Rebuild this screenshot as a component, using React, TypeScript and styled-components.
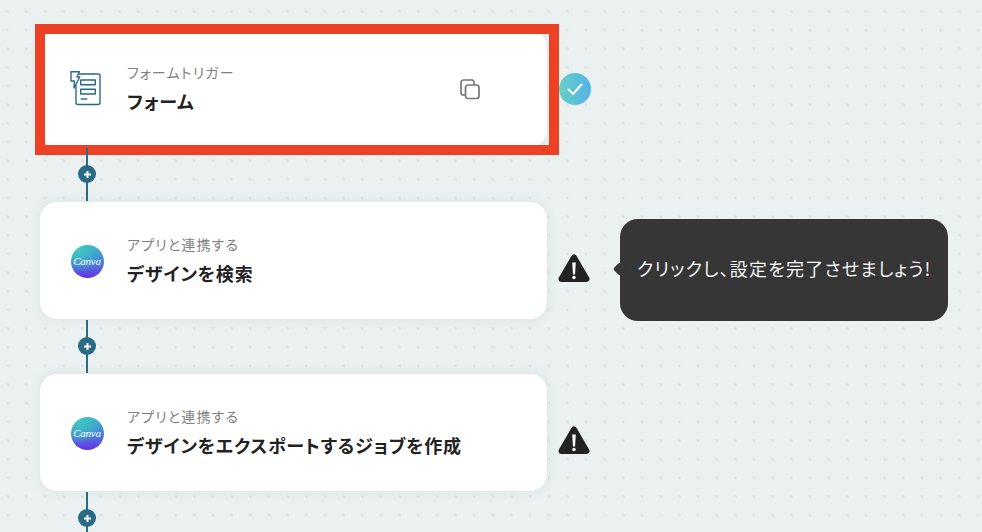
import React from "react";
import styled, { createGlobalStyle } from "styled-components";

const Global = createGlobalStyle`
  html, body { margin: 0; padding: 0; }
  body { font-family: "Noto Sans CJK JP", "Noto Sans", sans-serif; font-feature-settings: "palt"; }
`;

const Canvas = styled.div`
  position: relative;
  width: 982px;
  height: 532px;
  overflow: hidden;
  box-sizing: border-box;
  padding: 29px 0 0 39px;
  background-color: #ebf1f1;
  background-image: radial-gradient(circle, #dfe5e6 1.3px, transparent 1.7px);
  background-size: 18.67px 18.67px;
  background-position: -1.6px 2.2px;
`;

const Step = styled.div`
  position: relative;
  display: flex;
  align-items: center;
  gap: 10px;
  width: 900px;
`;

const Card = styled.div`
  width: 509px;
  height: 119px;
  box-sizing: border-box;
  display: flex;
  align-items: center;
  padding: 0 66px 0 29px;
  background: #fff;
  border-radius: 18px;
  border: 1px solid #e4e9ea;
  box-shadow: 0 0 12px rgba(60, 85, 95, 0.08);
`;

const IconSlot = styled.div`
  width: 36px;
  height: 36px;
  margin-right: 22px;
  display: flex;
  align-items: center;
  justify-content: center;
  flex: none;
`;

const Texts = styled.div`
  flex: 1;
  display: flex;
  flex-direction: column;
  gap: 6px;
  margin-top: -1px;
`;

const Label = styled.div`
  font-size: 14px;
  line-height: 20px;
  letter-spacing: 1.15px;
  color: #7f7f7f;
`;

const Title = styled.div`
  font-size: 18px;
  line-height: 26px;
  font-weight: 700;
  letter-spacing: 0.82px;
  color: #222;
`;

const Highlight = styled.div`
  position: absolute;
  left: -4px;
  top: -5px;
  width: 524px;
  height: 131px;
  box-sizing: border-box;
  border: 10px solid #ec4124;
  pointer-events: none;
`;

const CheckBadge = styled.div`
  width: 32px;
  height: 32px;
  border-radius: 50%;
  background: linear-gradient(90deg, #64d0c4, #54b2ea);
  display: flex;
  align-items: center;
  justify-content: center;
  flex: none;
  margin-left: 1px;
`;

const WarnSlot = styled.div`
  flex: none;
  display: flex;
  margin-top: 14px;
`;

const Connector = styled.div`
  position: relative;
  width: 96px;
  height: 53px;
  display: flex;
  align-items: center;
  justify-content: center;
  &::before {
    content: "";
    position: absolute;
    left: 47px;
    top: 0;
    bottom: 0;
    width: 2px;
    background: #2a6a85;
  }
`;

const Plus = styled.div`
  position: relative;
  width: 18px;
  height: 18px;
  margin-bottom: 1px;
  border-radius: 50%;
  background: #2a6a85;
  display: flex;
  align-items: center;
  justify-content: center;
`;

const CanvaLogo = styled.div`
  width: 33px;
  height: 33px;
  margin-top: 1px;
  border-radius: 50%;
  background: radial-gradient(circle at 25% 15%, #3fc7c0 0%, transparent 60%),
    linear-gradient(180deg, #3bb3c8 0%, #4a7fd8 55%, #6a2fe8 100%);
  display: flex;
  align-items: center;
  justify-content: center;
  color: #fff;
  font-family: "Liberation Serif", serif;
  font-style: italic;
  font-size: 11px;
  letter-spacing: -0.2px;
  font-feature-settings: normal;
`;

const Tooltip = styled.div`
  position: absolute;
  left: 581px;
  top: 18px;
  width: 328px;
  height: 102px;
  box-sizing: border-box;
  border-radius: 18px;
  background: #363636;
  color: #f4f4f4;
  font-size: 18px;
  letter-spacing: 1.22px;
  display: flex;
  align-items: center;
  padding: 0 0 5px 17px;
  white-space: nowrap;
  &::before {
    content: "";
    position: absolute;
    left: -5px;
    top: 45px;
    width: 10px;
    height: 10px;
    background: #363636;
    transform: rotate(45deg);
    border-radius: 2px;
  }
`;

const FormIcon = () => (
  <svg width="36" height="38" viewBox="0 0 36 38" fill="none" stroke="#2a6a85" strokeWidth="1.4" strokeLinejoin="round">
    <path d="M9 4 H29 a2 2 0 0 1 2 2 V32.5 a2 2 0 0 1 -2 2 H9 a2 2 0 0 1 -2 -2 V15" />
    <path d="M2 1.7 H10.3 L8 7 H10.8 L5 18 L5.3 11 H2 Z" fill="#fff" />
    <rect x="11.7" y="10" width="14.6" height="4.7" />
    <rect x="11.7" y="19.3" width="14.6" height="4.7" />
    <path d="M11.7 29 H18.3" />
  </svg>
);

const CopyIcon = () => (
  <svg width="22" height="22" viewBox="0 0 22 22" fill="none" stroke="#777" strokeWidth="1.7">
    <rect x="6.5" y="7" width="13.5" height="13.5" rx="2.5" />
    <path d="M6 17 H4.5 A2.5 2.5 0 0 1 2 14.5 V4.5 A2.5 2.5 0 0 1 4.5 2 H12 A2.5 2.5 0 0 1 15 4.5 V7" />
  </svg>
);

const CheckIcon = () => (
  <svg width="18" height="18" viewBox="0 0 18 18" fill="none" stroke="#fff" strokeWidth="2" strokeLinecap="round" strokeLinejoin="round">
    <path d="M2.5 9.5 L7 14 L15.5 4.5" />
  </svg>
);

const WarnIcon = () => (
  <WarnSlot>
    <svg width="32" height="30" viewBox="0 0 32 30">
      <path d="M16 4.5 L28.5 26 H3.5 Z" fill="#222" stroke="#222" strokeWidth="6" strokeLinejoin="round" />
      <path d="M14.2 9.5 H17.8 L17 21.5 H15 Z" fill="#fff" />
      <circle cx="16" cy="24.5" r="1.7" fill="#fff" />
    </svg>
  </WarnSlot>
);

const PlusIcon = () => (
  <svg width="7" height="7" viewBox="0 0 7 7" stroke="#fff" strokeWidth="2">
    <path d="M3.5 0 V7 M0 3.5 H7" />
  </svg>
);

const Link = () => (
  <Connector>
    <Plus>
      <PlusIcon />
    </Plus>
  </Connector>
);

export default function App() {
  return (
    <Canvas>
      <Global />
      <Step>
        <Card>
          <IconSlot>
            <FormIcon />
          </IconSlot>
          <Texts>
            <Label>フォームトリガー</Label>
            <Title>フォーム</Title>
          </Texts>
          <CopyIcon />
        </Card>
        <CheckBadge>
          <CheckIcon />
        </CheckBadge>
        <Highlight />
      </Step>
      <Link />
      <Step>
        <Card>
          <IconSlot>
            <CanvaLogo>Canva</CanvaLogo>
          </IconSlot>
          <Texts>
            <Label>アプリと連携する</Label>
            <Title>デザインを検索</Title>
          </Texts>
        </Card>
        <WarnIcon />
        <Tooltip>クリックし、設定を完了させましょう!</Tooltip>
      </Step>
      <Link />
      <Step>
        <Card>
          <IconSlot>
            <CanvaLogo>Canva</CanvaLogo>
          </IconSlot>
          <Texts>
            <Label>アプリと連携する</Label>
            <Title>デザインをエクスポートするジョブを作成</Title>
          </Texts>
        </Card>
        <WarnIcon />
      </Step>
      <Link />
    </Canvas>
  );
}
